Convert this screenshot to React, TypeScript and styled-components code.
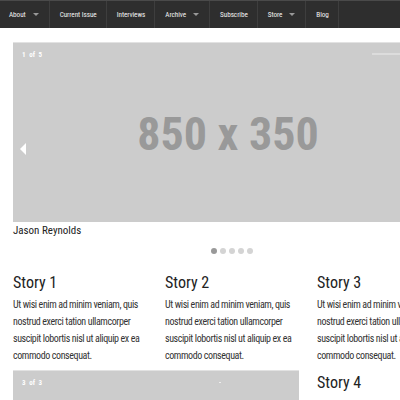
import React from "react";
import styled, { createGlobalStyle } from "styled-components";

const Global = createGlobalStyle`
  html, body { margin: 0; padding: 0; background: #fff; overflow: hidden; }
  body { font-family: "Roboto Condensed", "Liberation Sans Narrow", "Roboto", sans-serif; color: #222; }
`;

const Page = styled.div`
  width: 400px;
  height: 400px;
  overflow: hidden;
`;

const Nav = styled.nav`
  display: flex;
  height: 28px;
  background: #2e2e2e;
  border-top: 1px solid #4a4a4a;
  box-sizing: border-box;
`;

const NavItem = styled.div<{ $first?: boolean }>`
  display: flex;
  align-items: center;
  gap: 7px;
  padding: 0 9px 0 ${(p) => (p.$first ? 9 : 10)}px;
  border-right: 1px solid #3e3e3e;
  color: #f2f2f2;
  font-size: 7.2px;
  letter-spacing: -0.05px;
  white-space: nowrap;
`;

const Caret = styled.span`
  width: 0;
  height: 0;
  border-left: 3px solid transparent;
  border-right: 3px solid transparent;
  border-top: 3px solid #999;
  margin-right: 1px;
`;

const Container = styled.div`
  width: 438px;
  margin-left: 13px;
  padding-top: 14px;
`;

const Slider = styled.div`
  position: relative;
  height: 180px;
  background: #cccccc;
  border-top: 1px solid #e2e2e2;
  box-sizing: border-box;
  display: flex;
  align-items: center;
  justify-content: center;
`;

const Counter = styled.div`
  position: absolute;
  left: 9px;
  top: 8px;
  color: #fff;
  font-size: 7px;
  font-weight: bold;
  word-spacing: 2px;
`;

const ProgressBar = styled.div`
  position: absolute;
  right: 51px;
  top: 10px;
  width: 28px;
  height: 2px;
  background: #dcdcdc;
`;

const Arrow = styled.div`
  position: absolute;
  left: 7px;
  top: 100px;
  width: 0;
  height: 0;
  border-top: 6px solid transparent;
  border-bottom: 6px solid transparent;
  border-right: 6px solid #fff;
`;

const Placeholder = styled.div`
  font-size: 46px;
  font-weight: bold;
  color: #999;
  margin-right: 8px;
  margin-top: 2px;
`;

const Caption = styled.div`
  font-size: 11px;
  line-height: 14px;
  color: #222;
  margin-top: 2px;
`;

const Dots = styled.div`
  display: flex;
  justify-content: center;
  gap: 3px;
  margin-top: 10px;
`;

const Dot = styled.span<{ $active?: boolean }>`
  width: 6px;
  height: 6px;
  border-radius: 50%;
  background: ${(p) => (p.$active ? "#999" : "#d4d4d4")};
`;

const Grid = styled.div`
  display: grid;
  grid-template-columns: repeat(3, 134px);
  column-gap: 18px;
  margin-top: 20px;
`;

const Story = styled.div``;

const StoryTitle = styled.h3`
  margin: 0;
  font-weight: normal;
  font-size: 16px;
  color: #222;
  line-height: 18px;
`;

const StoryText = styled.p`
  margin: 4px 0 0;
  font-size: 10px;
  letter-spacing: -0.4px;
  line-height: 17px;
  color: #333;
`;

const SmallSlider = styled.div`
  position: relative;
  grid-column: span 2;
  height: 60px;
  background: #cccccc;
  border-top: 1px solid #e2e2e2;
  margin-top: 6px;
`;

const TinyDot = styled.span`
  position: absolute;
  left: 206px;
  top: 11px;
  width: 2px;
  height: 1px;
  background: #eee;
`;

const SideStory = styled.div`
  margin-top: 10px;
`;

const navItems: { label: string; caret?: boolean }[] = [
  { label: "About", caret: true },
  { label: "Current Issue" },
  { label: "Interviews" },
  { label: "Archive", caret: true },
  { label: "Subscribe" },
  { label: "Store", caret: true },
  { label: "Blog" },
];

const lorem = "Ut wisi enim ad minim veniam, quis nostrud exerci tation ullamcorper suscipit lobortis nisl ut aliquip ex ea commodo consequat.";

export default function App() {
  return (
    <Page>
      <Global />
      <Nav>
        {navItems.map((n, i) => (
          <NavItem key={n.label} $first={i === 0}>
            {n.label}
            {n.caret && <Caret />}
          </NavItem>
        ))}
      </Nav>
      <Container>
        <Slider>
          <Counter>1 of 5</Counter>
          <ProgressBar />
          <Arrow />
          <Placeholder>850 x 350</Placeholder>
        </Slider>
        <Caption>Jason Reynolds</Caption>
        <Dots>
          <Dot $active />
          <Dot />
          <Dot />
          <Dot />
          <Dot />
        </Dots>
        <Grid>
          {[1, 2, 3].map((i) => (
            <Story key={i}>
              <StoryTitle>Story {i}</StoryTitle>
              <StoryText>{lorem}</StoryText>
            </Story>
          ))}
          <SmallSlider>
            <Counter>3 of 3</Counter>
            <TinyDot />
          </SmallSlider>
          <SideStory>
            <StoryTitle>Story 4</StoryTitle>
          </SideStory>
        </Grid>
      </Container>
    </Page>
  );
}
